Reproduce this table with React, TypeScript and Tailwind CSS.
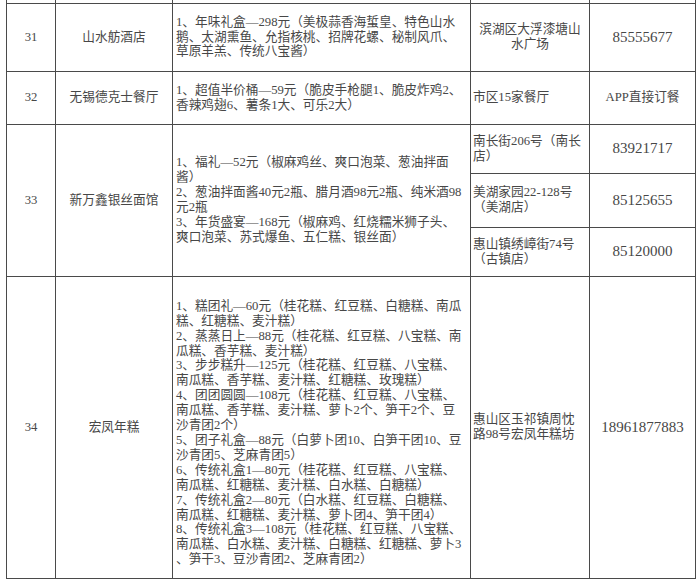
import React from 'react';

const cell = 'border border-[#4a4a4a] p-0 align-middle';

const Lines = ({ lines, className = '' }: { lines: string[]; className?: string }) => (
  <div className={`pl-[3px] leading-[14.9px] ${className}`}>
    {lines.map((l, i) => (
      <div key={i} className="whitespace-nowrap">
        {l}
      </div>
    ))}
  </div>
);

const Phone = ({ n }: { n: string }) => (
  <div className="text-center text-[15px]">{n}</div>
);

const row31 = [
  '1、年味礼盒—298元（美极蒜香海蜇皇、特色山水',
  '鹅、太湖熏鱼、允指核桃、招牌花螺、秘制风爪、',
  '草原羊羔、传统八宝酱）',
];

const row32 = ['1、超值半价桶—59元（脆皮手枪腿1、脆皮炸鸡2、', '香辣鸡翅6、薯条1大、可乐2大）'];

const row33 = [
  '1、福礼—52元（椒麻鸡丝、爽口泡菜、葱油拌面',
  '酱）',
  '2、葱油拌面酱40元2瓶、腊月酒98元2瓶、纯米酒98',
  '元2瓶',
  '3、年货盛宴—168元（椒麻鸡、红烧糯米狮子头、',
  '爽口泡菜、苏式爆鱼、五仁糕、银丝面）',
];

const row34 = [
  '1、糕团礼—60元（桂花糕、红豆糕、白糖糕、南瓜',
  '糕、红糖糕、麦汁糕）',
  '2、蒸蒸日上—88元（桂花糕、红豆糕、八宝糕、南',
  '瓜糕、香芋糕、麦汁糕）',
  '3、步步糕升—125元（桂花糕、红豆糕、八宝糕、',
  '南瓜糕、香芋糕、麦汁糕、红糖糕、玫瑰糕）',
  '4、团团圆圆—108元（桂花糕、红豆糕、八宝糕、',
  '南瓜糕、香芋糕、麦汁糕、萝卜2个、笋干2个、豆',
  '沙青团2个）',
  '5、团子礼盒—88元（白萝卜团10、白笋干团10、豆',
  '沙青团5、芝麻青团5）',
  '6、传统礼盒1—80元（桂花糕、红豆糕、八宝糕、',
  '南瓜糕、红糖糕、麦汁糕、白水糕、白糖糕）',
  '7、传统礼盒2—80元（白水糕、红豆糕、白糖糕、',
  '南瓜糕、红糖糕、麦汁糕、萝卜团4、笋干团4）',
  '8、传统礼盒3—108元（桂花糕、红豆糕、八宝糕、',
  '南瓜糕、白水糕、麦汁糕、白糖糕、红糖糕、萝卜3',
  '、笋干3、豆沙青团2、芝麻青团2）',
];

export default function App() {
  return (
    <div
      className="w-[700px] h-[585px] overflow-hidden bg-white text-[#474747] text-[12.7px] leading-[14.9px]"
      style={{ fontFamily: '"Liberation Serif", "Noto Sans CJK SC", serif' }}
    >
      <table className="ml-[6px] w-[689px] table-fixed border-collapse">
        <colgroup>
          <col className="w-[49px]" />
          <col className="w-[117px]" />
          <col className="w-[298px]" />
          <col className="w-[119px]" />
          <col className="w-[106px]" />
        </colgroup>
        <tbody>
          {/* tail of previous row */}
          <tr className="h-[3px]">
            <td className="border-x border-[#4a4a4a] p-0" />
            <td className="border-x border-[#4a4a4a] p-0" />
            <td className="border-x border-[#4a4a4a] p-0" />
            <td className="border-x border-[#4a4a4a] p-0" />
            <td className="border-x border-[#4a4a4a] p-0" />
          </tr>

          {/* 31 */}
          <tr className="h-[68px]">
            <td className={`${cell} text-center`}>31</td>
            <td className={`${cell} text-center`}>山水舫酒店</td>
            <td className={cell}>
              <Lines lines={row31} />
            </td>
            <td className={`${cell} text-center`}>
              滨湖区大浮漆塘山
              <br />
              水广场
            </td>
            <td className={cell}>
              <Phone n="85555677" />
            </td>
          </tr>

          {/* 32 */}
          <tr className="h-[53px]">
            <td className={`${cell} text-center`}>32</td>
            <td className={`${cell} text-center`}>无锡德克士餐厅</td>
            <td className={cell}>
              <Lines lines={row32} />
            </td>
            <td className={`${cell} pl-[2px]`}>市区15家餐厅</td>
            <td className={`${cell} text-center`}>APP直接订餐</td>
          </tr>

          {/* 33 */}
          <tr className="h-[49px]">
            <td rowSpan={3} className={`${cell} text-center`}>
              33
            </td>
            <td rowSpan={3} className={`${cell} text-center`}>
              新万鑫银丝面馆
            </td>
            <td rowSpan={3} className={cell}>
              <Lines lines={row33} />
            </td>
            <td className={`${cell} pl-[2px]`}>
              南长街206号（南长
              <br />
              店）
            </td>
            <td className={cell}>
              <Phone n="83921717" />
            </td>
          </tr>
          <tr className="h-[54px]">
            <td className={`${cell} pl-[2px]`}>
              美湖家园22-128号
              <br />
              （美湖店）
            </td>
            <td className={cell}>
              <Phone n="85125655" />
            </td>
          </tr>
          <tr className="h-[49px]">
            <td className={`${cell} pl-[2px]`}>
              惠山镇绣嶂街74号
              <br />
              （古镇店）
            </td>
            <td className={cell}>
              <Phone n="85120000" />
            </td>
          </tr>

          {/* 34 */}
          <tr className="h-[302px]">
            <td className={`${cell} text-center`}>34</td>
            <td className={`${cell} text-center`}>宏凤年糕</td>
            <td className={cell}>
              <Lines lines={row34} className="pt-[12px]" />
            </td>
            <td className={`${cell} pl-[2px]`}>
              惠山区玉祁镇周忱
              <br />
              路98号宏凤年糕坊
            </td>
            <td className={cell}>
              <Phone n="18961877883" />
            </td>
          </tr>
        </tbody>
      </table>
    </div>
  );
}
